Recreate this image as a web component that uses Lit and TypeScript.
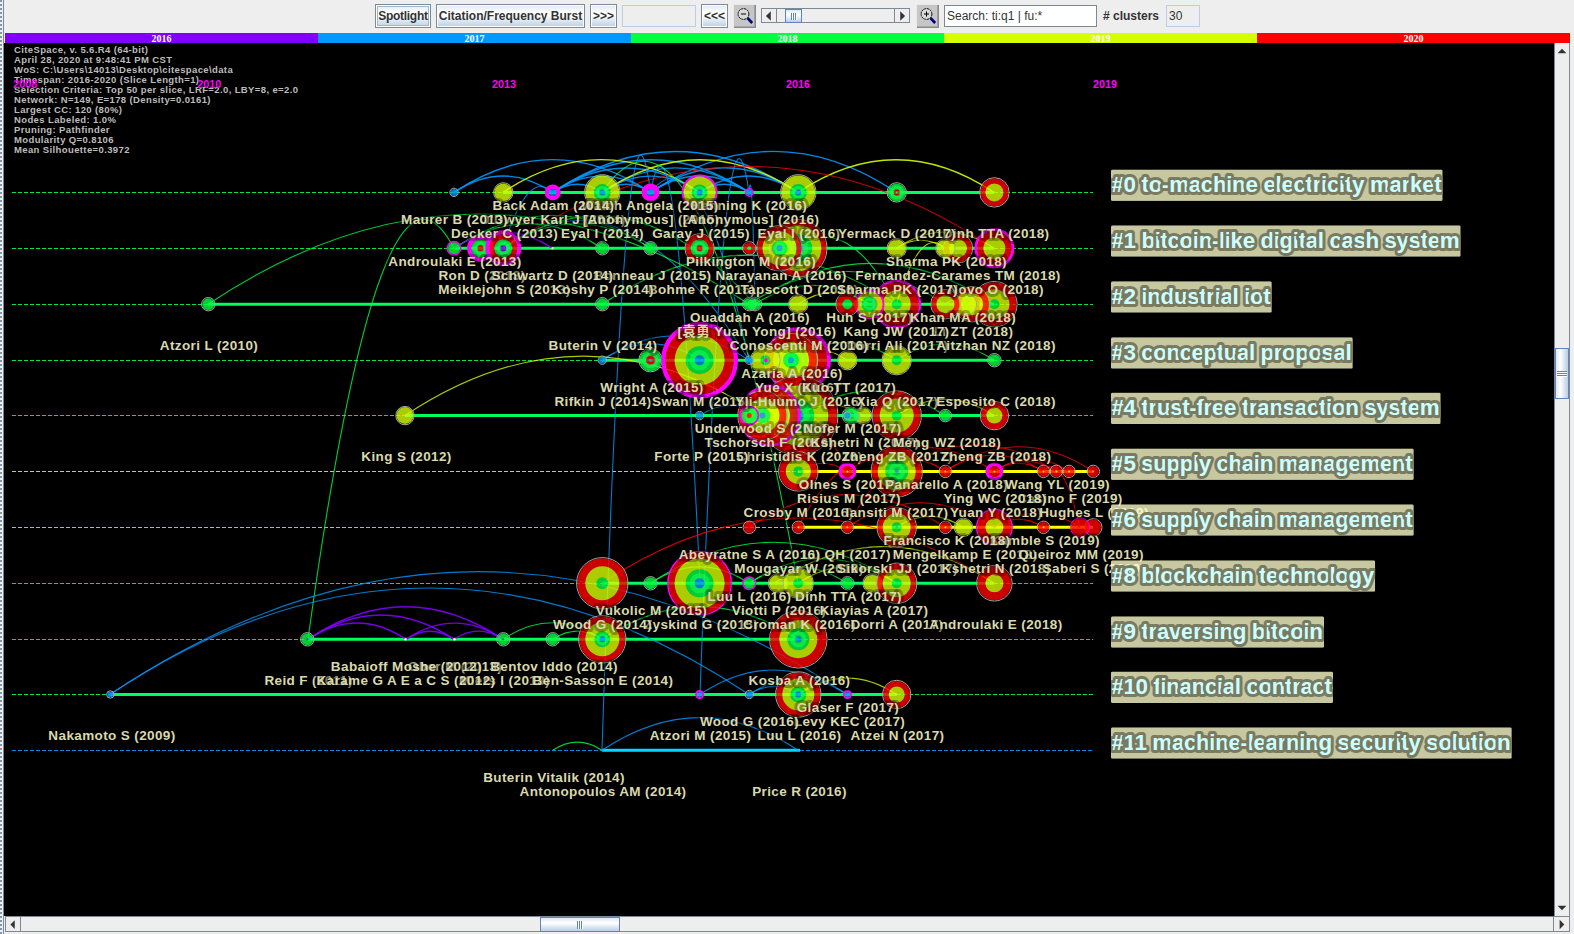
import { LitElement, html, svg, css } from "lit";
import { customElement } from "lit/decorators.js";

const ROWS: Record<string, number> = { a: 192.4, b: 248.3, c: 304.2, d: 360.2, e: 415.6, f: 471.4, g: 527.3, h: 583.3, i: 639.3, j: 694.5, k: 750.3 };

const GREEN = "#00ff40";
const YELLOW = "#d5ff00";
const RED = "#ff0000";
const BLUE = "#0099ff";
const VIOLET = "#8000ff";
const MAGENTA = "#ff00ff";
const COLORS: Record<string, string> = { g: GREEN, y: YELLOW, r: RED, b: BLUE, v: VIOLET, m: MAGENTA };

const SLICES = [
  ["2016", VIOLET], ["2017", BLUE], ["2018", GREEN], ["2019", YELLOW], ["2020", RED],
];

const INFO = [
  "CiteSpace, v. 5.6.R4 (64-bit)",
  "April 28, 2020 at 9:48:41 PM CST",
  "WoS: C:\\Users\\14013\\Desktop\\citespace\\data",
  "Timespan: 2016-2020 (Slice Length=1)",
  "Selection Criteria: Top 50 per slice, LRF=2.0, LBY=8, e=2.0",
  "Network: N=149, E=178 (Density=0.0161)",
  "Largest CC: 120 (80%)",
  "Nodes Labeled: 1.0%",
  "Pruning: Pathfinder",
  "Modularity Q=0.8106",
  "Mean Silhouette=0.3972",
];

const YEARS: [string, number][] = [["2008", 13.3], ["2010", 197.3], ["2013", 492], ["2016", 786], ["2019", 1093]];

// row, start of solid line, end of solid line, solid colour, dash colour
const LINES: [string, number, number, string, string][] = [
  ["a", 503, 994, "#00ff5a", GREEN], ["b", 454, 994, "#00ff5a", GREEN], ["c", 208, 994, "#00ff5a", GREEN],
  ["d", 602, 994, "#00ff5a", GREEN], ["e", 405, 994, "#00ff5a", GREEN], ["f", 798, 1093, "#ffff00", "#e6e65a"],
  ["g", 798, 1093, "#ffff00", "#e0e000"], ["h", 602, 994, "#00ff5a", GREEN], ["i", 308, 798, "#00ff5a", GREEN],
  ["j", 110, 897, "#00ff5a", GREEN], ["k", 602, 800, "#00d8ff", BLUE],
];

// colour, x1, row1, x2, row2
const LINKS: [string, number, string, number, string][] = [
  ["b", 454, "a", 552.7, "a"], ["b", 454, "a", 650.5, "a"], ["b", 552.7, "a", 650.5, "a"], ["b", 552.7, "a", 699.6, "a"],
  ["b", 552.7, "a", 749, "a"], ["b", 552.7, "a", 798, "a"], ["b", 650.5, "a", 896.5, "a"], ["b", 602, "a", 749, "a"],
  ["b", 602, "a", 699.6, "a"], ["b", 650.5, "a", 749, "a"], ["b", 650.5, "a", 798, "a"], ["b", 699.6, "a", 749, "a"],
  ["b", 699.6, "a", 798, "a"], ["b", 552.7, "a", 602, "a"], ["b", 602, "a", 650.5, "a"], ["b", 503, "b", 552.7, "a"],
  ["y", 503, "a", 699.6, "a"], ["y", 602, "a", 798, "a"], ["y", 798, "a", 994, "a"],
  ["r", 503, "b", 994, "b"],
  ["b", 602, "k", 650.5, "a"], ["b", 700, "j", 749, "a"], ["b", 700, "h", 650.5, "a"], ["b", 650.5, "a", 749, "d"],
  ["b", 749, "a", 755, "c"], ["b", 503, "b", 749, "d"],
  ["g", 602, "a", 798, "h"], ["g", 308, "i", 454, "b"], ["g", 208, "c", 749, "c"],
  ["g", 454, "b", 650.5, "b"], ["g", 454, "b", 602, "b"], ["g", 503, "b", 650.5, "b"], ["g", 503, "b", 755, "c"],
  ["v", 454, "b", 552.7, "b"], ["g", 602, "c", 896.5, "c"],
  ["y", 896.5, "b", 945, "b"], ["y", 896.5, "b", 994, "b"], ["y", 896.5, "c", 945, "b"],
  ["g", 749, "c", 994, "c"], ["g", 749, "c", 945, "c"], ["g", 755, "c", 869, "c"], ["y", 798, "c", 869, "c"], ["g", 798, "b", 896, "c"],
  ["y", 945, "c", 994, "c"],
  ["b", 602, "d", 700, "d"], ["b", 602, "d", 749, "d"], ["g", 791, "d", 896.5, "d"], ["g", 896.5, "d", 994, "d"], ["y", 765, "d", 847, "d"],
  ["y", 405, "e", 762, "e"], ["b", 700, "e", 762, "e"], ["g", 798, "e", 945, "e"], ["y", 896.5, "e", 994, "e"], ["y", 798, "e", 863, "e"],
  ["r", 798, "f", 847, "f"], ["r", 847, "f", 994, "f"], ["r", 945, "f", 1043, "f"], ["r", 945, "f", 1093, "f"],
  ["r", 896.5, "f", 1056, "f"], ["r", 994, "f", 1056, "f"], ["r", 994, "f", 1069, "f"], ["r", 994, "f", 1043, "f"],
  ["r", 749, "g", 945, "g"], ["r", 798, "g", 896.5, "f"], ["r", 847, "g", 994, "g"], ["r", 847, "g", 945, "f"], ["r", 1043, "f", 1080, "g"],
  ["r", 994, "g", 1043, "g"], ["r", 994, "g", 1080, "g"], ["y", 896.5, "g", 963, "g"], ["r", 770, "e", 847, "f"],
  ["r", 602, "h", 994, "h"],
  ["g", 650.5, "h", 896.5, "h"], ["g", 650.5, "h", 749, "h"], ["g", 749, "h", 847, "h"], ["g", 749, "h", 896.5, "h"],
  ["y", 774, "h", 994, "h"], ["y", 798, "h", 896.5, "h"],
  ["g", 503, "i", 602, "i"], ["g", 552.7, "i", 602, "i"], ["g", 602, "i", 798, "i"],
  ["v", 308, "i", 406, "i"], ["v", 308, "i", 454, "i"], ["v", 308, "i", 503, "i"], ["v", 406, "i", 454, "i"], ["v", 406, "i", 503, "i"], ["v", 454, "i", 503, "i"],
  ["b", 110, "j", 749, "j"], ["b", 110, "j", 847, "j"], ["b", 700, "j", 847, "j"], ["b", 749, "j", 847, "j"], ["b", 749, "j", 798, "j"],
  ["y", 798, "j", 896.5, "j"],
  ["g", 552.7, "k", 602, "k"], ["b", 602, "k", 798, "k"],
];

// row, x, rings from the outside in: colour letter and radius
const NODES: [string, number, string][] = [
  ["a", 454, "b3.5"], ["a", 503.3, "y9"], ["a", 552.7, "m8 b3.5"], ["a", 602.3, "y17 g8.5 b3"], ["a", 650.5, "m9 b3.5"],
  ["a", 699.6, "m18 y16 g8 b3"], ["a", 749.3, "m4.5 b3"], ["a", 798.3, "y17 g8.5 b3"], ["a", 896.7, "g9 r3 g1"], ["a", 994.4, "r14 y9"],
  ["b", 454, "m7.5 g6"], ["b", 480.5, "m13.5 g9 r3"], ["b", 503.3, "m18 r14 g9 v3"], ["b", 602.3, "g6"], ["b", 650.5, "g6"],
  ["b", 699.6, "r14 g9 r3"], ["b", 749.3, "r6 g2"], ["b", 798.3, "r28 y23 g14 b5"], ["b", 779.5, "r22 y17 g8 b3"],
  ["b", 896.7, "y9"], ["b", 958, "r14 y9"], ["b", 945.4, "y9"], ["b", 994.4, "m20 r17 y11"],
  ["c", 208.3, "g6"], ["c", 602.3, "g6"], ["c", 755, "g6"], ["c", 749.3, "g6"], ["c", 798.3, "y9"],
  ["c", 896.7, "m24.5 r22 y14 g5"], ["c", 869.5, "m15 y13 g8"], ["c", 847.4, "r11 g5"],
  ["c", 994.4, "r22 y15 g5"], ["c", 972, "r17 y11"], ["c", 965, "y11"], ["c", 945.4, "r14 y9"],
  ["d", 602.3, "b3.5"], ["d", 650.5, "g11 r5 b1.5"], ["d", 699.6, "m38.5 r34 y25 g14 b5"], ["d", 798, "m33 r29 y20 g10"],
  ["d", 791, "r26 y18 g8 b3"], ["d", 765.5, "y14 g5 m2"], ["d", 749.3, "b3.5"], ["d", 847.4, "y9"], ["d", 896.7, "y14 g5"], ["d", 994.4, "g6"],
  ["e", 405, "y8.5"], ["e", 699.6, "b3.5"], ["e", 798.3, "r39 y30 g16 b5"], ["e", 770, "m31 r28 y20"], ["e", 762.5, "r24 y17 g8 b3"],
  ["e", 749.3, "m10 g8 r2.5"], ["e", 863, "y8"], ["e", 851, "g8"], ["e", 847.4, "b3"], ["e", 896.7, "r24 y17 g5"], ["e", 945.4, "g5.5"], ["e", 994.4, "r13.5 y8"],
  ["f", 798.3, "r19 y12.5 g5 y1"], ["f", 847.4, "m9 r5.5 y1"], ["f", 896.7, "r25 y19 g11.5 b2"], ["f", 945.4, "r5.5 y1"], ["f", 994.4, "m9 r5.5 y1"],
  ["f", 1043.5, "r5.5 y1"], ["f", 1056.3, "r5.5 y1"], ["f", 1069, "r5.5 y1"], ["f", 1093.3, "r5.5 y1"],
  ["g", 749.3, "r5.5"], ["g", 798.3, "r5.5 y1"], ["g", 847.4, "r5.5 y1"], ["g", 896.7, "r19 y14 g5 b1"], ["g", 945.4, "r5.5 y1"], ["g", 963.5, "y8.5"],
  ["g", 994.4, "m18.5 r17 y9"], ["g", 1043.5, "r5.5 y1"], ["g", 1093.3, "r8"], ["g", 1080, "m10 r9"],
  ["h", 602.3, "r25 y17 g6"], ["h", 650.5, "g6"], ["h", 699.6, "m32.5 r31 y25 g14 b5"], ["h", 749.3, "m7 g5.5"], ["h", 778, "y9"],
  ["h", 798.3, "y14.5 g5"], ["h", 847.4, "g6"], ["h", 872.5, "y9"], ["h", 896.7, "r19.5 y14 g5"], ["h", 994.4, "r17 y9"],
  ["i", 307.3, "g6 v1"], ["i", 503.3, "g6 v1"], ["i", 552.7, "g6"], ["i", 602.3, "r23 y17 g8 b3"], ["i", 798.3, "r28 y19 g11 b3"],
  ["j", 110.3, "b3"], ["j", 699.6, "m4.5 b2.5"], ["j", 749.3, "b3.5"], ["j", 798.3, "r22 y16 g8 b3"], ["j", 847.4, "m4.5 b2.5"], ["j", 896.7, "r13.5 y8"],
];

// row, line below the row, centre x, text
const LABELS: [string, number, number, string][] = [
  ["a", 1, 749, "Henning K (2016)"], ["a", 1, 650, "Walch Angela (2015)"], ["a", 1, 553.5, "Back Adam (2014)"],
  ["a", 2, 552.5, "O'Dwyer Karl J (2014)"], ["a", 2, 454.5, "Maurer B (2013)"], ["a", 2, 651, "[Anonymous] (2015)"], ["a", 2, 751, "[Anonymous] (2016)"],
  ["a", 3, 504.6, "Decker C (2013)"], ["a", 3, 602.5, "Eyal I (2014)"], ["a", 3, 701, "Garay J (2015)"], ["a", 3, 799, "Eyal I (2016)"],
  ["a", 3, 996, "Dinh TTA (2018)"], ["a", 3, 897, "Yermack D (2017)"],
  ["b", 1, 455, "Androulaki E (2013)"], ["b", 1, 751, "Pilkington M (2016)"], ["b", 1, 946.5, "Sharma PK (2018)"],
  ["b", 2, 482, "Ron D (2013)"], ["b", 2, 652.5, "Bonneau J (2015)"], ["b", 2, 552.5, "Schwartz D (2014)"], ["b", 2, 781, "Narayanan A (2016)"], ["b", 2, 958, "Fernandez-Carames TM (2018)"],
  ["b", 3, 504.5, "Meiklejohn S (2013)"], ["b", 3, 701.5, "Bohme R (2015)"], ["b", 3, 603, "Koshy P (2014)"], ["b", 3, 799.5, "Tapscott D (2016)"],
  ["b", 3, 996, "Novo O (2018)"], ["b", 3, 897.5, "Sharma PK (2017)"],
  ["c", 1, 750, "Ouaddah A (2016)"], ["c", 1, 869.5, "Huh S (2017)"], ["c", 1, 963, "Khan MA (2018)"],
  ["c", 2, 757, "[袁勇 Yuan Yong] (2016)"], ["c", 2, 973.5, "Li ZT (2018)"], ["c", 2, 896.5, "Kang JW (2017)"],
  ["c", 3, 209, "Atzori L (2010)"], ["c", 3, 603, "Buterin V (2014)"], ["c", 3, 897.5, "Dorri Ali (2017)"], ["c", 3, 799, "Conoscenti M (2016)"], ["c", 3, 996, "Aitzhan NZ (2018)"],
  ["d", 1, 792, "Azaria A (2016)"],
  ["d", 2, 652, "Wright A (2015)"], ["d", 2, 797, "Yue X (2016)"], ["d", 2, 849, "Kuo TT (2017)"],
  ["d", 3, 603, "Rifkin J (2014)"], ["d", 3, 701, "Swan M (2015)"], ["d", 3, 799.5, "Yli-Huumo J (2016)"], ["d", 3, 897.5, "Xia Q (2017)"], ["d", 3, 996, "Esposito C (2018)"],
  ["e", 1, 763, "Underwood S (2016)"], ["e", 1, 852.5, "Nofer M (2017)"],
  ["e", 2, 769, "Tschorsch F (2016)"], ["e", 2, 865, "Kshetri N (2017)"], ["e", 2, 947, "Meng WZ (2018)"],
  ["e", 3, 406.5, "King S (2012)"], ["e", 3, 799.5, "Christidis K (2016)"], ["e", 3, 701.5, "Forte P (2015)"], ["e", 3, 897, "Zheng ZB (2017)"], ["e", 3, 996, "Zheng ZB (2018)"],
  ["f", 1, 848, "Olnes S (2017)"], ["f", 1, 946.5, "Panarello A (2018)"], ["f", 1, 1057.5, "Wang YL (2019)"],
  ["f", 2, 849, "Risius M (2017)"], ["f", 2, 1070, "Casino F (2019)"], ["f", 2, 995, "Ying WC (2018)"],
  ["f", 3, 798.5, "Crosby M (2016)"], ["f", 3, 897, "Iansiti M (2017)"], ["f", 3, 996, "Yuan Y (2018)"], ["f", 3, 1094, "Hughes L (2019)"],
  ["g", 1, 1045, "Kamble S (2019)"], ["g", 1, 947, "Francisco K (2018)"],
  ["g", 2, 847, "Lu QH (2017)"], ["g", 2, 749.5, "Abeyratne S A (2016)"], ["g", 2, 965, "Mengelkamp E (2018)"], ["g", 2, 1081, "Queiroz MM (2019)"],
  ["g", 3, 799, "Mougayar W (2016)"], ["g", 3, 897.5, "Sikorski JJ (2017)"], ["g", 3, 996, "Kshetri N (2018)"], ["g", 3, 1094, "Saberi S (2019)"],
  ["h", 1, 749.5, "Luu L (2016)"], ["h", 1, 848.5, "Dinh TTA (2017)"],
  ["h", 2, 651.5, "Vukolic M (2015)"], ["h", 2, 779, "Viotti P (2016)"], ["h", 2, 874, "Kiayias A (2017)"],
  ["h", 3, 701, "Zyskind G (2015)"], ["h", 3, 602.5, "Wood G (2014)"], ["h", 3, 799.5, "Croman K (2016)"], ["h", 3, 897, "Dorri A (2017)"], ["h", 3, 996, "Androulaki E (2018)"],
  ["i", 2, 455, "Ober M (2013)"], ["i", 2, 554, "Bentov Iddo (2014)"], ["i", 2, 406.5, "Babaioff Moshe (2012)"],
  ["i", 3, 308.5, "Reid F (2011)"], ["i", 3, 504.5, "Miers I (2013)"], ["i", 3, 406, "Karame G A E a C S (2012)"], ["i", 3, 603, "Ben-Sasson E (2014)"], ["i", 3, 799.5, "Kosba A (2016)"],
  ["j", 1, 848, "Glaser F (2017)"], ["j", 2, 849.5, "Levy KEC (2017)"], ["j", 2, 749.5, "Wood G (2016)"],
  ["j", 3, 112, "Nakamoto S (2009)"], ["j", 3, 700.5, "Atzori M (2015)"], ["j", 3, 799.5, "Luu L (2016)"], ["j", 3, 897.5, "Atzei N (2017)"],
  ["k", 2, 554, "Buterin Vitalik (2014)"], ["k", 3, 603, "Antonopoulos AM (2014)"], ["k", 3, 799.5, "Price R (2016)"],
];

// row, right edge, text
const CLUSTERS: [string, number, string][] = [
  ["a", 1442.7, "#0 to-machine electricity market"], ["b", 1460.7, "#1 bitcoin-like digital cash system"], ["c", 1271.8, "#2 industrial iot"],
  ["d", 1352.8, "#3 conceptual proposal"], ["e", 1440.7, "#4 trust-free transaction system"], ["f", 1413.8, "#5 supply chain management"],
  ["g", 1413.8, "#6 supply chain management"], ["h", 1375.2, "#8 blockchain technology"], ["i", 1324, "#9 traversing bitcoin"],
  ["j", 1333, "#10 financial contract"], ["k", 1511.8, "#11 machine-learning security solution"],
];

@customElement("app-root")
export class AppRoot extends LitElement {
  static styles = css`
    :host { display: grid; grid-template-columns: 5px 1fr; width: 1574px; height: 934px; overflow: hidden; background: #eee; font-family: "Liberation Sans", Arial, sans-serif; }
    .divider { box-sizing: border-box; width: 4px; margin-right: 1px; border-right: 1px solid #7a8a99; background: radial-gradient(circle at 1px 1px, #8296aa 0.8px, transparent 1px) 0 0 / 3px 4px repeat-y, #eee; }
    .main { display: grid; grid-template-rows: 33px 10px 873px 18px; min-width: 0; }
    .bar { display: flex; gap: 5px; padding: 4px 0 0 370px; align-items: flex-start; font-size: 12px; color: #333; }
    .btn { box-sizing: border-box; height: 24px; border: 1px solid #7a8a99; box-shadow: inset 0 0 0 1px #fff; font-weight: bold; line-height: 22px; text-align: center; background: linear-gradient(#dde8f3, #fff 35%, #fff 45%, #b8cfe5); white-space: nowrap; }
    .spot { width: 56px; letter-spacing: -0.3px; box-shadow: inset 0 0 0 1px #fff, inset 0 0 0 2px #a3b8cc; }
    .burst { width: 149px; letter-spacing: 0; }
    .more { width: 27px; }
    .field { box-sizing: border-box; height: 22px; margin-top: 1px; border: 1px solid #b8cfe5; line-height: 20px; padding-left: 2px; }
    .status { width: 74px; }
    .count { width: 34px; }
    .search { width: 153px; border-color: #7a8a99; background: #fff; }
    .lbl { font-weight: bold; line-height: 24px; width: 57px; margin: 0 1px; white-space: nowrap; }
    .mag { display: block; width: 23px; height: 24px; }
    .slider { display: grid; grid-template-columns: 15px 8px 17px 1fr 15px; box-sizing: border-box; width: 149px; height: 15px; margin: 4px 1px 0 0; border: 1px solid #7a8a99; background: #eee; }
    .cell { display: block; border-right: 1px solid #7a8a99; box-sizing: border-box; }
    .cell.last { border-right: 0; border-left: 1px solid #7a8a99; }
    .thumb { box-sizing: border-box; border: 1px solid #6382bf; background: linear-gradient(#dde8f3, #fff 40%, #b8cfe5); display: flex; align-items: center; justify-content: center; }
    .grip { width: 6px; height: 7px; background: repeating-linear-gradient(90deg, #6382bf 0 1px, #fff 1px 2px); }
    .slices { display: grid; grid-template-columns: repeat(5, 313px); font: bold 10px/12px "Liberation Serif", serif; color: #fff; text-align: center; }
    .view { display: grid; grid-template-columns: 1fr 16px 4px; margin-left: -1px; }
    .graph { display: block; width: 1550px; height: 873px; background: #000; }
    .vscroll { display: grid; grid-template-rows: 16px 1fr 51px 501px 16px; border-left: 1px solid #7a8a99; border-right: 1px solid #7a8a99; background: #eee; box-sizing: border-box; }
    .vthumb { box-sizing: border-box; border: 1px solid #6382bf; background: linear-gradient(90deg, #dde8f3, #fff 35%, #b8cfe5); display: flex; align-items: center; justify-content: center; }
    .vgrip { width: 10px; height: 6px; background: repeating-linear-gradient(#6382bf 0 1px, #fff 1px 2px); }
    .hscroll { display: grid; grid-template-columns: 15px 519px 80px 1fr 16px; margin: 0 4px 2px 0; width: 1565px; border: 1px solid #7a8a99; box-sizing: border-box; background: #eee; }
    .hgrip { width: 6px; height: 8px; background: repeating-linear-gradient(90deg, #6382bf 0 1px, #fff 1px 2px); }
    .arrow { display: block; width: 100%; height: 100%; }
    .info { font-size: 9.5px; font-weight: bold; letter-spacing: 0.38px; fill: #bcbcbc; }
    .year { font-size: 10.8px; font-weight: bold; fill: #ff00ff; }
    .label { font: bold 13.5px "Liberation Sans", "Noto Sans CJK SC", sans-serif; letter-spacing: 0.38px; fill: #d9d9ad; stroke: rgba(0, 0, 0, 0.3); stroke-width: 6px; stroke-linejoin: round; paint-order: stroke; text-anchor: middle; }
    .cluster { font-size: 22.4px; font-weight: bold; fill: #ccffff; stroke: #7a7a60; stroke-width: 6px; stroke-linejoin: round; paint-order: stroke; }
    .box { fill: #ffffcc; opacity: 0.785; }
    .curve { fill: none; stroke-width: 1.1; opacity: 0.8; }
    .curve.strong { stroke-width: 1.4; opacity: 0.9; }
  `;

  private arrow(d: string) {
    return html`<svg class="arrow" viewBox="0 0 16 16"><path d=${d} fill="#333" /></svg>`;
  }

  private magnifier(plus: boolean) {
    return html`<svg class="mag" viewBox="0 0 23 24">
      <rect width="23" height="24" fill="#c6c6c6" /><path d="M0 24V0H23" fill="none" stroke="#e8e8e8" stroke-width="2" />
      <path d="M1 23.2H22.2V1" fill="none" stroke="#8a8a8a" stroke-width="1.6" />
      <circle cx="10.5" cy="10" r="5.4" fill="#d8d8d8" stroke="#111" stroke-dasharray="2.2 .6" />
      <path d="M8 10h5" stroke="#000" />${plus ? svg`<path d="M10.5 7.5v5" stroke="#000" />` : ""}
      <path d="M14.5 14l4.7 5" stroke="#000080" stroke-width="2.6" />
    </svg>`;
  }

  private link([c, x1, r1, x2, r2]: [string, number, string, number, string]) {
    const y1 = ROWS[r1], y2 = ROWS[r2];
    const top = Math.min(y1, y2) - Math.hypot(x2 - x1, y2 - y1) / 3;
    const strong = (r1 === "a" && r2 === "a") || c === "v";
    return svg`<path class=${strong ? "curve strong" : "curve"} stroke=${COLORS[c]} d=${`M${x1} ${y1}Q${(x1 + x2) / 2} ${top} ${x2} ${y2}`} />`;
  }

  private node([row, x, spec]: [string, number, string]) {
    const y = ROWS[row];
    const rings = spec.split(" ").map((s) => ({ c: s[0], r: Number(s.slice(1)) }));
    const outer = rings[0];
    const body = outer.c === "m" ? rings.slice(1) : rings;
    return svg`
      ${outer.c === "m"
        ? svg`<circle cx=${x} cy=${y} r=${(outer.r + body[0].r) / 2} fill="none" stroke=${MAGENTA} stroke-width=${outer.r - body[0].r} />`
        : svg`<circle cx=${x} cy=${y} r=${outer.r + 0.7} fill="none" stroke="#a8a8a8" stroke-width="1" />`}
      <g opacity="0.8">
        ${body.map((g) => svg`<circle cx=${x} cy=${y} r=${g.r} fill=${COLORS[g.c]} />`)}
      </g>
      ${body.filter((g) => g.c === "g" && g.r >= 7).map((g) => svg`<circle cx=${x} cy=${y} r=${g.r * 0.5 + 0.7} fill="none" stroke="#14ff5a" stroke-width=${g.r * 0.35} opacity=".55" />`)}`;
  }

  private line([row, from, to, solid, dash]: [string, number, number, string, string]) {
    const y = ROWS[row];
    return svg`<path d=${`M12 ${Math.floor(y) + 0.5}H${from}M${to} ${Math.floor(y) + 0.5}H1093`} stroke=${dash} stroke-dasharray="4 2" opacity=".9" />
      <path d=${`M${from} ${y}H${to}`} stroke=${solid} stroke-width="3" />`;
  }

  render() {
    return html`
      <div class="divider"></div>
      <div class="main">
        <div class="bar">
          <div class="btn spot">Spotlight</div>
          <div class="btn burst">Citation/Frequency Burst</div>
          <div class="btn more">&gt;&gt;&gt;</div>
          <div class="field status"></div>
          <div class="btn more">&lt;&lt;&lt;</div>
          ${this.magnifier(false)}
          <div class="slider">
            <span class="cell">${this.arrow("M10 2.5v11L4.5 8z")}</span><span></span>
            <span class="thumb"><span class="grip"></span></span><span></span>
            <span class="cell last">${this.arrow("M6 2.5v11L11.5 8z")}</span>
          </div>
          ${this.magnifier(true)}
          <div class="field search">Search: ti:q1 | fu:*</div>
          <div class="lbl"># clusters</div>
          <div class="field count">30</div>
        </div>
        <div class="slices">${SLICES.map(([t, c]) => html`<div style="background:${c}">${t}</div>`)}</div>
        <div class="view">
          <svg class="graph" viewBox="4 43 1550 873">
            ${INFO.map((t, i) => svg`<text class="info" x="14" y=${53 + i * 10}>${t}</text>`)}
            ${YEARS.map(([t, x]) => svg`<text class="year" x=${x} y="88">${t}</text>`)}
            ${LINES.map((l) => this.line(l))}
            ${LINKS.map((l) => this.link(l))}
            ${NODES.map((n) => this.node(n))}
            <circle cx="405.5" cy="639.3" r="1.2" fill="#fff" /><circle cx="454.5" cy="639.3" r="1.2" fill="#fff" /><circle cx="552.5" cy="248.3" r="1.2" fill="#ddd" />
            ${LABELS.map(([r, n, x, t]) => svg`<text class="label" x=${x} y=${Math.floor(ROWS[r] + 3.8) + n * 14}>${t}</text>`)}
            ${CLUSTERS.map(([r, right, t], i) => svg`
              <clipPath id=${`clip${i}`}><rect x="1111" y=${ROWS[r] - 23} width=${right - 1111} height="31.5" rx="1.5" /></clipPath>
              <g clip-path=${`url(#clip${i})`}>
                <rect class="box" x="1111" y=${ROWS[r] - 23} width=${right - 1111} height="31.5" />
                <text class="cluster" x="1111.5" y=${Math.floor(ROWS[r])} textLength=${right - 1112.5}>${t}</text>
              </g>`)}
          </svg>
          <div class="vscroll">
            ${this.arrow("M3 10.5h10L8 5.500z")}<span></span>
            <span class="vthumb"><span class="vgrip"></span></span><span></span>
            ${this.arrow("M3 5.5h10L8 10.500z")}
          </div>
        </div>
        <div class="hscroll">
          <span class="cell">${this.arrow("M10 3v10L5 8z")}</span><span></span>
          <span class="thumb"><span class="hgrip"></span></span><span></span>
          <span class="cell last">${this.arrow("M6 3v10L11 8z")}</span>
        </div>
      </div>
    `;
  }
}
